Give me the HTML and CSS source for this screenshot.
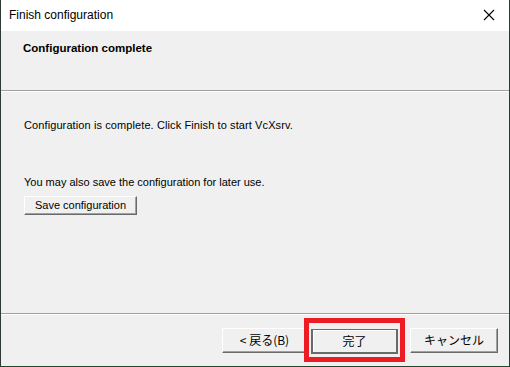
FILE: index.html
```html
<!DOCTYPE html>
<html lang="en">

<head>
  <meta charset="UTF-8">
  <meta name="viewport" content="width=device-width, initial-scale=1.0">
  <title>Finish configuration</title>
  <link rel="stylesheet" href="styles.css">
</head>

<body>
  <div class="window">
    <header class="titlebar">
      <span class="title">Finish configuration</span>
      <svg class="close" width="12" height="12" viewBox="0 0 12 12">
        <path d="M1 1 L11 11 M11 1 L1 11" stroke="#000" stroke-width="1.1" fill="none" />
      </svg>
    </header>
    <section class="wizard-head">
      <h4>Configuration complete</h4>
    </section>
    <main class="wizard-body">
      <p class="line-first">Configuration is complete. Click Finish to start VcXsrv.</p>
      <p class="line-second">You may also save the configuration for later use.</p>
      <button class="btn btn-save">Save configuration</button>
    </main>
    <footer class="wizard-foot">
      <button class="btn btn-nav">&lt; 戻る(B)</button>
      <div class="highlight">
        <button class="btn btn-nav btn-default">完了</button>
      </div>
      <button class="btn btn-nav btn-cancel">キャンセル</button>
    </footer>
  </div>
</body>

</html>
```

FILE: styles.css
```css
* {
  margin: 0;
  padding: 0;
  box-sizing: border-box;
}

body {
  width: 510px;
  height: 367px;
  overflow: hidden;
  background: #1d4a2c;
  font-family: 'Liberation Sans', Arial, sans-serif;
}

.window {
  display: flex;
  flex-direction: column;
  width: 510px;
  height: 367px;
  border-left: 1px solid #2e3a32;
  border-right: 1px solid #2e3a32;
  border-bottom: 1px solid #1d4a2c;
  background-color: #f0f0f0;
}

.titlebar {
  display: flex;
  align-items: center;
  justify-content: space-between;
  height: 31px;
  padding: 0 14px 1px 8px;
  background-color: #fff;
}

.title {
  font-family: 'Liberation Sans', sans-serif;
  font-size: 12px;
  color: #000;
}

.close {
  display: block;
}

.wizard-head {
  height: 60px;
  padding: 11px 22px;
  border-bottom: 1px solid #a0a0a0;
  box-shadow: 0 1px 0 #fff;
}

.wizard-head h4 {
  font-family: 'Liberation Sans', sans-serif;
  font-size: 11.5px;
  font-weight: 700;
  color: #000;
}

.wizard-body {
  display: flex;
  flex-direction: column;
  align-items: flex-start;
  height: 223px;
  padding: 28px 23px 0;
  border-bottom: 1px solid #a0a0a0;
  box-shadow: 0 1px 0 #fff;
  font-size: 11px;
  color: #000;
}

.line-first {
  letter-spacing: 0.1px;
}

.line-second {
  margin-top: 45px;
}

.btn {
  font-family: 'Liberation Sans', 'Noto Sans CJK JP', sans-serif;
  font-size: 11px;
  color: #000;
  background-color: #f0f0f0;
  border: 1px solid;
  border-color: #fff #6a6a6a #6a6a6a #fff;
  box-shadow: inset -1px -1px 0 #a0a0a0;
}

.btn-save {
  width: 113px;
  height: 19px;
  margin-top: 8px;
  padding-bottom: 1px;
}

.wizard-foot {
  display: flex;
  align-items: center;
  padding: 0 0 0 221px;
  flex: 1;
}

.btn-nav {
  width: 85px;
  height: 25px;
  padding-bottom: 1px;
  font-family: 'Noto Sans CJK JP', sans-serif;
  font-size: 12px;
}

.highlight {
  display: flex;
  padding: 6px 2px 3px 2px;
  margin-left: -3px;
  border: 5px solid #ed1c24;
}

.btn-default {
  width: 87px;
  border: 2px solid #6a6a6a;
  border-top-width: 1px;
  box-shadow: inset 1px 1px 0 #fff;
}

.btn-cancel {
  width: 88px;
  margin-left: 5px;
}
```
